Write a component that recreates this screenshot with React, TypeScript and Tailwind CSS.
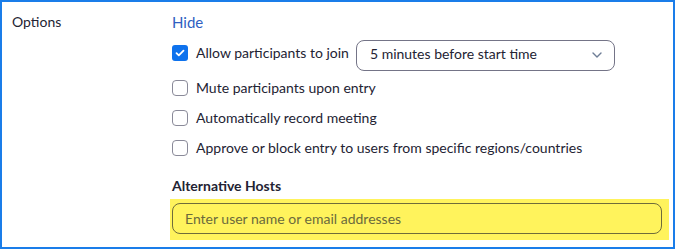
import { useState } from "react";

export default function App() {
  return (
    <div className="h-[249px] w-[676px] bg-white font-['Lato',sans-serif] text-[14px] leading-[20px] text-[#232333]">
      <div className="flex h-[249px] w-[675px] border-2 border-[#1a7de9]">
        <div className="w-[170px] shrink-0 pl-[10px] pt-[10px]">Options</div>
        <div className="flex flex-col pt-[10px]">
          <a className="text-[15px] text-[#2f5fc2]" href="#">Hide</a>

          <div className="mt-[8px] flex items-start">
            <div className="mt-[3px]">
              <CheckRow label="Allow participants to join" checked />
            </div>
            <button
              className="ml-[7px] flex h-[31px] w-[259px] items-start justify-between rounded-[8px] border border-[#747487] pl-[13px] pr-[12px] pt-[3px] text-left"
              type="button"
            >
              <span>5 minutes before start time</span>
              <svg className="mt-[8px]" width="10" height="6" viewBox="0 0 10 6" fill="none">
                <path d="M1 1l4 4 4-4" stroke="#6e7d96" strokeWidth="1.4" strokeLinecap="round" strokeLinejoin="round" />
              </svg>
            </button>
          </div>

          <div className="mt-[7px]">
            <CheckRow label="Mute participants upon entry" />
          </div>
          <div className="mt-[10px]">
            <CheckRow label="Automatically record meeting" />
          </div>
          <div className="mt-[10px]">
            <CheckRow label="Approve or block entry to users from specific regions/countries" />
          </div>

          <p className="mt-[18px] font-bold">Alternative Hosts</p>
          <div className="-ml-[2px] mt-[3px] w-[499px] bg-[#fff35c] pb-[6px] pl-[2px] pr-[7px] pt-[4px]">
            <input
              className="h-[31px] w-[490px] rounded-[8px] border border-[#6f6c3a] bg-transparent px-[12px] outline-none placeholder:text-[#6b6a3c]"
              placeholder="Enter user name or email addresses"
            />
          </div>
        </div>
      </div>
    </div>
  );
}

function CheckRow({ label, checked = false }: { label: string; checked?: boolean }) {
  const [on, setOn] = useState(checked);

  return (
    <label className="flex items-center">
      <span
        className={
          on
            ? "flex h-[16px] w-[16px] items-center justify-center rounded-[3px] bg-[#0e72ed]"
            : "h-[16px] w-[16px] rounded-[4px] border border-[#8a8a99] bg-white"
        }
        onClick={() => setOn(!on)}
      >
        {on && (
          <svg width="10" height="8" viewBox="0 0 10 8" fill="none">
            <path d="M1.5 4.2l2.3 2.2L8.5 1.6" stroke="white" strokeWidth="1.8" strokeLinecap="round" strokeLinejoin="round" />
          </svg>
        )}
      </span>
      <span className="ml-[8px]">{label}</span>
    </label>
  );
}
